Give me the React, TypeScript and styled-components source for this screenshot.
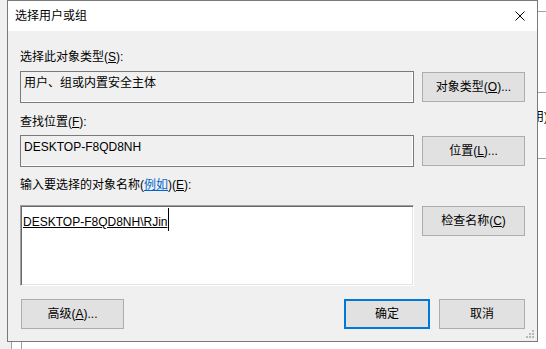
import React from "react";
import styled, { createGlobalStyle } from "styled-components";

const GlobalStyle = createGlobalStyle`
  html, body {
    margin: 0;
    padding: 0;
    background: #ffffff;
  }
  body {
    font-family: "Liberation Sans", "Noto Sans CJK SC", sans-serif;
    font-size: 12px;
    color: #000;
  }
`;

const FONT = `"Liberation Sans", "Noto Sans CJK SC", sans-serif`;

const Page = styled.div`
  width: 546px;
  height: 349px;
  overflow: hidden;
  display: grid;
  grid-template-columns: 7px 531px 1fr;
  grid-template-rows: 342px 1fr;
  background: #ffffff;
`;

const LeftStrip = styled.div`
  grid-column: 1;
  grid-row: 1 / 3;
  background: #f0f0f0;
`;

const RightStrip = styled.div`
  grid-column: 3;
  grid-row: 1;
  background: #ffffff;
  display: flex;
  flex-direction: column;
  overflow: hidden;
`;

const BackLine = styled.div<{ $mt: number }>`
  margin-top: ${(p) => p.$mt}px;
  height: 1px;
  background: #a0a0a0;
  flex-shrink: 0;
`;

const BackText = styled.div`
  margin-top: 16px;
  margin-left: -6px;
  line-height: 16px;
  white-space: nowrap;
  font-family: ${FONT};
`;

const BottomStrip = styled.div`
  grid-column: 2 / 4;
  grid-row: 2;
  display: grid;
  grid-template-columns: 4px 1px 9px 1px 1fr;
`;

const StripCell = styled.div<{ $bg: string }>`
  background: ${(p) => p.$bg};
`;

const Dialog = styled.div`
  grid-column: 2;
  grid-row: 1;
  box-sizing: border-box;
  border: 1px solid #7a7a7a;
  display: flex;
  flex-direction: column;
  background: #f0f0f0;
  position: relative;
`;

const TitleBar = styled.div`
  height: 30px;
  background: #ffffff;
  display: flex;
  align-items: center;
  justify-content: space-between;
  padding: 0 9px 0 7px;
  font-family: ${FONT};
`;

const Title = styled.span`
  font-size: 12px;
  line-height: 16px;
`;

const CloseIcon = styled.svg`
  width: 10px;
  height: 10px;
  margin-right: 3px;
`;

const Body = styled.div`
  flex: 1;
  padding: 18px 12px 12px 12px;
  display: flex;
  flex-direction: column;
`;

const FieldLabel = styled.div<{ $mt?: number; $mb: number }>`
  margin-top: ${(p) => p.$mt ?? 0}px;
  margin-bottom: ${(p) => p.$mb}px;
  line-height: 16px;
  font-size: 12px;
  white-space: nowrap;
`;

const Link = styled.span`
  color: #0066cc;
  text-decoration: underline;
`;

const Row = styled.div`
  display: grid;
  grid-template-columns: 394px 103px;
  column-gap: 8px;
  align-items: start;
`;

const ReadOnlyBox = styled.div`
  box-sizing: border-box;
  height: 32px;
  border: 1px solid #7a7a7a;
  box-shadow: inset -1px -1px 0 #ffffff;
  padding: 3px 3px;
  line-height: 16px;
  background: #f0f0f0;
`;

const EditBox = styled.div`
  box-sizing: border-box;
  height: 81px;
  background: #ffffff;
  border-style: solid;
  border-width: 1px;
  border-color: #a0a0a0 #ffffff #ffffff #a0a0a0;
  box-shadow: inset 1px 1px 0 #696969, inset -1px -1px 0 #e3e3e3;
  padding: 8px 2px 0 2px;
  line-height: 16px;
`;

const Resolved = styled.span`
  display: inline-block;
  position: relative;
  text-decoration: underline;
  line-height: 16px;
  &::after {
    content: "";
    position: absolute;
    right: -2px;
    top: -6px;
    width: 1px;
    height: 23px;
    background: #000;
  }
`;

const Button = styled.button<{ $default?: boolean; $mt?: number; $w?: number }>`
  box-sizing: border-box;
  width: ${(p) => (p.$w ? `${p.$w}px` : "100%")};
  height: 30px;
  margin: ${(p) => p.$mt ?? 0}px 0 0 0;
  padding: 0;
  background: #e1e1e1;
  border: ${(p) => (p.$default ? "2px solid #0078d7" : "1px solid #adadad")};
  font-family: ${FONT};
  font-size: 12px;
  color: #000;
  line-height: 16px;
`;

const Footer = styled.div`
  margin-top: 13px;
  display: flex;
  align-items: center;
  gap: 9px;
  padding-left: 1px;
`;

const Spacer = styled.div`
  flex: 1;
`;

const Grip = styled.svg`
  position: absolute;
  right: 3px;
  bottom: 3px;
  width: 8px;
  height: 8px;
`;

export default function App() {
  return (
    <>
      <GlobalStyle />
      <Page>
        <LeftStrip />
        <Dialog>
          <TitleBar>
            <Title>选择用户或组</Title>
            <CloseIcon viewBox="0 0 10 10">
              <path d="M0.5 0.5 L9.5 9.5 M9.5 0.5 L0.5 9.5" stroke="#000" strokeWidth="1" />
            </CloseIcon>
          </TitleBar>
          <Body>
            <FieldLabel $mb={6}>
              选择此对象类型(<u>S</u>):
            </FieldLabel>
            <Row>
              <ReadOnlyBox>用户、组或内置安全主体</ReadOnlyBox>
              <Button $mt={1}>
                对象类型(<u>O</u>)...
              </Button>
            </Row>
            <FieldLabel $mt={11} $mb={5}>
              查找位置(<u>F</u>):
            </FieldLabel>
            <Row>
              <ReadOnlyBox>DESKTOP-F8QD8NH</ReadOnlyBox>
              <Button $mt={1}>
                位置(<u>L</u>)...
              </Button>
            </Row>
            <FieldLabel $mt={10} $mb={12}>
              输入要选择的对象名称(<Link>例如</Link>)(<u>E</u>):
            </FieldLabel>
            <Row>
              <EditBox>
                <Resolved>DESKTOP-F8QD8NH\RJin</Resolved>
              </EditBox>
              <Button $mt={1}>
                检查名称(<u>C</u>)
              </Button>
            </Row>
            <Footer>
              <Button $w={103}>
                高级(<u>A</u>)...
              </Button>
              <Spacer />
              <Button $default $w={86}>
                确定
              </Button>
              <Button $w={86}>取消</Button>
            </Footer>
          </Body>
          <Grip viewBox="0 0 8 8">
            <rect x="6" y="0" width="2" height="2" fill="#b8b8b8" />
            <rect x="3" y="3" width="2" height="2" fill="#b8b8b8" />
            <rect x="6" y="3" width="2" height="2" fill="#b8b8b8" />
            <rect x="0" y="6" width="2" height="2" fill="#b8b8b8" />
            <rect x="3" y="6" width="2" height="2" fill="#b8b8b8" />
            <rect x="6" y="6" width="2" height="2" fill="#b8b8b8" />
          </Grip>
        </Dialog>
        <RightStrip>
          <BackLine $mt={11} />
          <BackLine $mt={80} />
          <BackText>用)</BackText>
          <BackLine $mt={33} />
        </RightStrip>
        <BottomStrip>
          <StripCell $bg="#f0f0f0" />
          <StripCell $bg="#a0a0a0" />
          <StripCell $bg="#ffffff" />
          <StripCell $bg="#a0a0a0" />
          <StripCell $bg="#ffffff" />
        </BottomStrip>
      </Page>
    </>
  );
}
